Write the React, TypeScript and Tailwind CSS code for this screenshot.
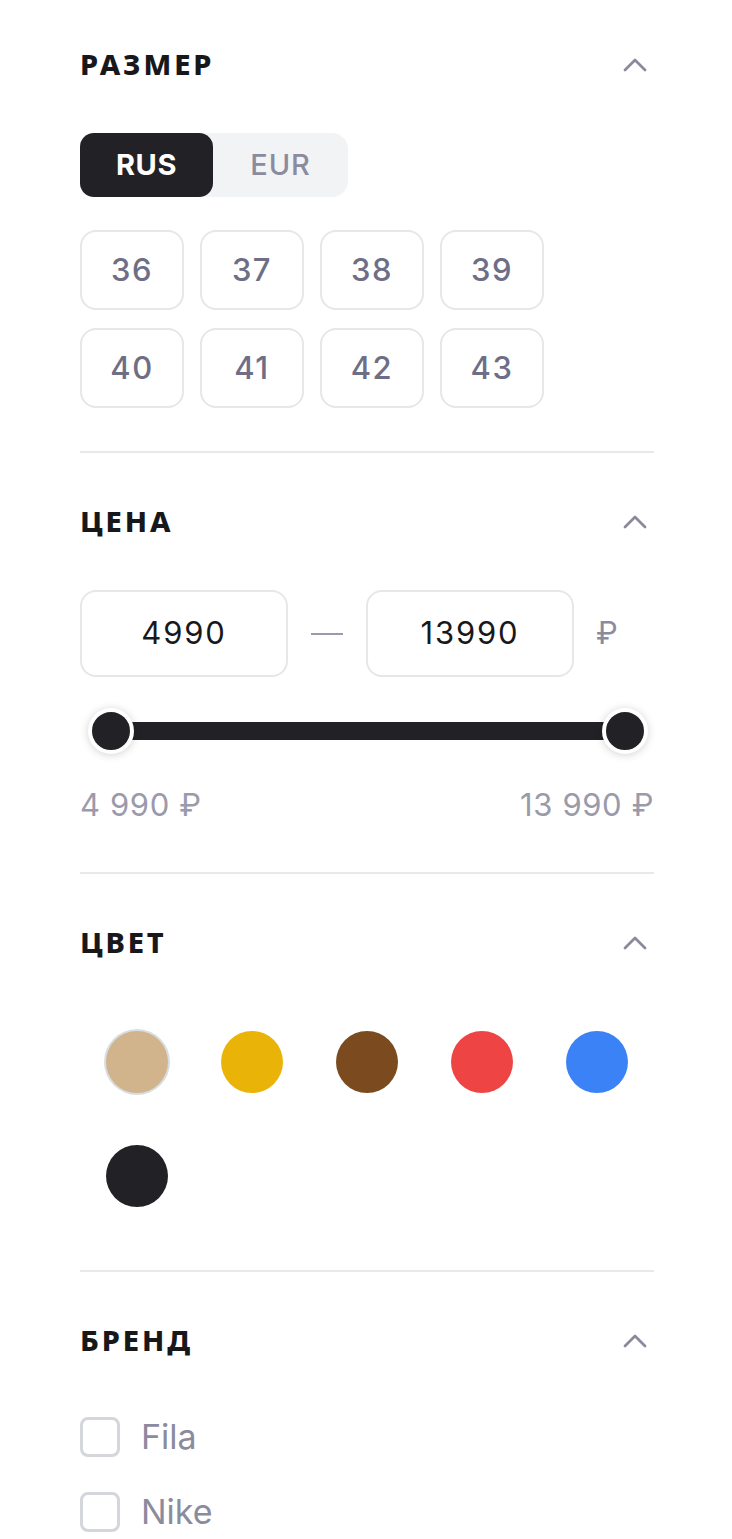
import React from "react";

const sizes = ["36", "37", "38", "39", "40", "41", "42", "43"];

const colors = [
  "bg-[#d2b48c] ring-2 ring-[#d7dde3]",
  "bg-[#eab308]",
  "bg-[#7b4a1e]",
  "bg-[#ef4444]",
  "bg-[#3b82f6]",
  "bg-[#222226]",
];

const brands = ["Fila", "Nike"];

const Chevron = () => (
  <svg width="26" height="16" viewBox="0 0 26 16" fill="none" className="mr-[6px]">
    <polyline
      points="3,14 13,4 23,14"
      stroke="#8a8a9c"
      strokeWidth="2.8"
      strokeLinecap="round"
      strokeLinejoin="round"
    />
  </svg>
);

type SectionProps = {
  title: string;
  first?: boolean;
  last?: boolean;
  children: React.ReactNode;
};

const Section: React.FC<SectionProps> = ({ title, first, last, children }) => {
  return (
    <div
      className={`${first ? "pt-[50px]" : "pt-[54px]"} ${
        last ? "pb-[20px]" : "pb-[43px] border-b-2 border-[#e8e9ec]"
      }`}
    >
      <div className="flex items-center justify-between h-[28px] mb-[55px]">
        <h3 className="font-['Noto_Sans',sans-serif] font-extrabold text-[29px] tracking-[0.1em] text-[#18181b] uppercase">
          {title}
        </h3>
        <Chevron />
      </div>
      {children}
    </div>
  );
};

export default function App() {
  return (
    <div className="min-h-screen bg-white font-['Inter',sans-serif]">
      <div className="w-[574px] ml-[80px]">
        <Section title="Размер" first>
          <div className="flex w-[268px] h-[64px] bg-[#f2f3f5] rounded-[16px]">
            <button className="w-[133px] h-full rounded-[14px] bg-[#222226] text-white font-bold text-[29px] tracking-[0.02em]">
              RUS
            </button>
            <button className="flex-1 h-full text-[#8b8b9e] font-medium text-[29px] tracking-[0.03em]">
              EUR
            </button>
          </div>
          <div className="grid grid-cols-[repeat(4,104px)] gap-x-[16px] gap-y-[18px] mt-[33px]">
            {sizes.map((s) => (
              <button
                key={s}
                className="h-[80px] rounded-[16px] border-2 border-[#e6e7eb] text-[31px] font-medium text-[#6e6e86] tracking-[0.05em]"
              >
                {s}
              </button>
            ))}
          </div>
        </Section>

        <Section title="Цена">
          <div className="flex items-center">
            <div className="w-[208px] h-[87px] rounded-[16px] border-2 border-[#e6e7eb] flex items-center justify-center text-[31px] text-[#18181b] tracking-[0.06em]">
              4990
            </div>
            <div className="w-[78px] flex justify-center">
              <div className="w-[32px] h-[2px] bg-[#9a9aab]" />
            </div>
            <div className="w-[208px] h-[87px] rounded-[16px] border-2 border-[#e6e7eb] flex items-center justify-center text-[31px] text-[#18181b] tracking-[0.06em]">
              13990
            </div>
            <div className="ml-[22px] text-[31px] text-[#8b8b9e]">₽</div>
          </div>
          <div className="flex items-center h-[50px] mt-[29px] pl-[8px] pr-[6px]">
            <div className="relative z-10 w-[46px] h-[46px] rounded-full bg-[#222226] border-[4px] border-white shadow-[0_1px_8px_rgba(0,0,0,0.18)] shrink-0" />
            <div className="flex-1 h-[18px] bg-[#222226] -mx-[12px]" />
            <div className="relative z-10 w-[46px] h-[46px] rounded-full bg-[#222226] border-[4px] border-white shadow-[0_1px_8px_rgba(0,0,0,0.18)] shrink-0" />
          </div>
          <div className="flex justify-between mt-[26px] text-[31px] text-[#9a9aab] tracking-[0.02em]">
            <span>4 990 ₽</span>
            <span>13 990 ₽</span>
          </div>
        </Section>

        <Section title="Цвет">
          <div className="grid grid-cols-5 gap-y-[52px] pt-[20px] pb-[20px]">
            {colors.map((c, i) => (
              <div key={i} className="flex justify-center">
                <div className={`w-[62px] h-[62px] rounded-full ${c}`} />
              </div>
            ))}
          </div>
        </Section>

        <Section title="Бренд" last>
          <div className="flex flex-col gap-[35px] pt-[8px]">
            {brands.map((b) => (
              <label key={b} className="flex items-center gap-[21px]">
                <span className="w-[40px] h-[40px] rounded-[8px] border-[3px] border-[#d3d6db] bg-white" />
                <span className="text-[34px] text-[#8b8b9e] leading-none">{b}</span>
              </label>
            ))}
          </div>
        </Section>
      </div>
    </div>
  );
}
